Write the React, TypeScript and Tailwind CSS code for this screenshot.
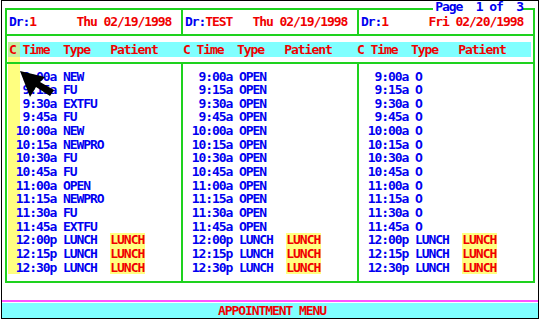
import React from "react";

const times = [
  "9:00a", "9:15a", "9:30a", "9:45a",
  "10:00a", "10:15a", "10:30a", "10:45a",
  "11:00a", "11:15a", "11:30a", "11:45a",
  "12:00p", "12:15p", "12:30p",
];

const col1Types = ["NEW", "FU", "EXTFU", "FU", "NEW", "NEWPRO", "FU", "FU", "OPEN", "NEWPRO", "FU", "EXTFU"];
const col2Types = Array(12).fill("OPEN");
const col3Types = Array(12).fill("O");

function Row({ t, type, lunch }: { t: string; type: string; lunch: boolean }) {
  return (
    <div className="h-[13.67px] leading-[13.67px] whitespace-pre text-[#0000f0]">
      {" " + t.padStart(6) + " " + type.padEnd(7)}
      {lunch && (
        <span className="inline-block h-[13.67px] align-top bg-[#ffff80] text-[#f00000] pr-[1px]">LUNCH</span>
      )}
    </div>
  );
}

function DataCol({ types, stripe }: { types: string[]; stripe?: boolean }) {
  return (
    <div
      className={
        stripe
          ? "w-[174px] pt-[5.5px] pl-[2px] bg-no-repeat bg-[length:100%_210px] bg-[linear-gradient(90deg,transparent_1px,#ffff80_1px,#ffff80_13px,transparent_13px)]"
          : "w-[174px] pt-[5.5px] pl-[2px]"
      }
    >
      {times.map((t, i) => (
        <Row key={t} t={t} type={i < 12 ? types[i] : "LUNCH"} lunch={i >= 12} />
      ))}
    </div>
  );
}

function HeadCell({ dr, date }: { dr: string; date: string }) {
  return (
    <div className="w-[174px] pl-[2px] whitespace-pre leading-[24px]">
      <span className="text-[#0000f0]">Dr:</span>
      <span className="text-[#f00000]">{dr.padEnd(7)}</span>
      <span className="text-[#f00000]">{date}</span>
    </div>
  );
}

function Sep() {
  return <div className="w-[2px] bg-[#1ed21e]" />;
}

export default function App() {
  return (
    <div className="w-[541px] h-[320px] bg-white pl-[1px] font-['DejaVu_Sans_Mono',monospace] font-bold text-[13px] tracking-[-1.07px]">
      <div className="w-[538px] h-[319px] border border-black flex flex-col">
        <div className="relative ml-[3px] mt-[7px] w-[530px] h-[275px] border-2 border-[#1ed21e] flex flex-col">
          <div className="absolute right-[10px] top-[-9px] h-[12px] leading-[12px] bg-white pl-[2px] whitespace-pre text-[#0000f0]">
            {"Page  1 of  3"}
          </div>
          <div className="h-[24px] flex">
            <HeadCell dr="1" date="Thu 02/19/1998" />
            <Sep />
            <HeadCell dr="TEST" date="Thu 02/19/1998" />
            <Sep />
            <HeadCell dr="1" date="Fri 02/20/1998" />
          </div>
          <div className="h-[2px] bg-[#1ed21e]" />
          <div className="h-[6px]" />
          <div className="h-[15px] ml-[1px] mr-[2px] pl-[1px] flex leading-[15px] whitespace-pre text-[#f00000] bg-[linear-gradient(90deg,#c4f0a0_12px,#80ffff_12px)]">
            <div className="w-[176px]">{"C Time  Type   Patient"}</div>
            <div className="w-[176px]">{"C Time  Type   Patient"}</div>
            <div className="w-[176px]">{"C Time  Type   Patient"}</div>
          </div>
          <div className="h-[5px] bg-[linear-gradient(90deg,transparent_1px,#ffff80_1px,#ffff80_13px,transparent_13px)]" />
          <div className="h-[2px] bg-[#1ed21e]" />
          <div className="flex-1 flex">
            <DataCol types={col1Types} stripe />
            <Sep />
            <DataCol types={col2Types} />
            <Sep />
            <DataCol types={col3Types} />
          </div>
          <svg className="absolute left-0 top-0 overflow-visible" width="1" height="1">
            <polygon
              points="13,61 38,67 33,72 47,80 43,86 29,77 23,87"
              fill="#000"
            />
          </svg>
        </div>
        <div className="mt-[17px] h-[2px] bg-[#ff55ff]" />
        <div className="mt-[1px] h-[15px] bg-[#80ffff] pl-[216px] leading-[15px] whitespace-pre text-[#f00000]">
          APPOINTMENT MENU
        </div>
      </div>
    </div>
  );
}
